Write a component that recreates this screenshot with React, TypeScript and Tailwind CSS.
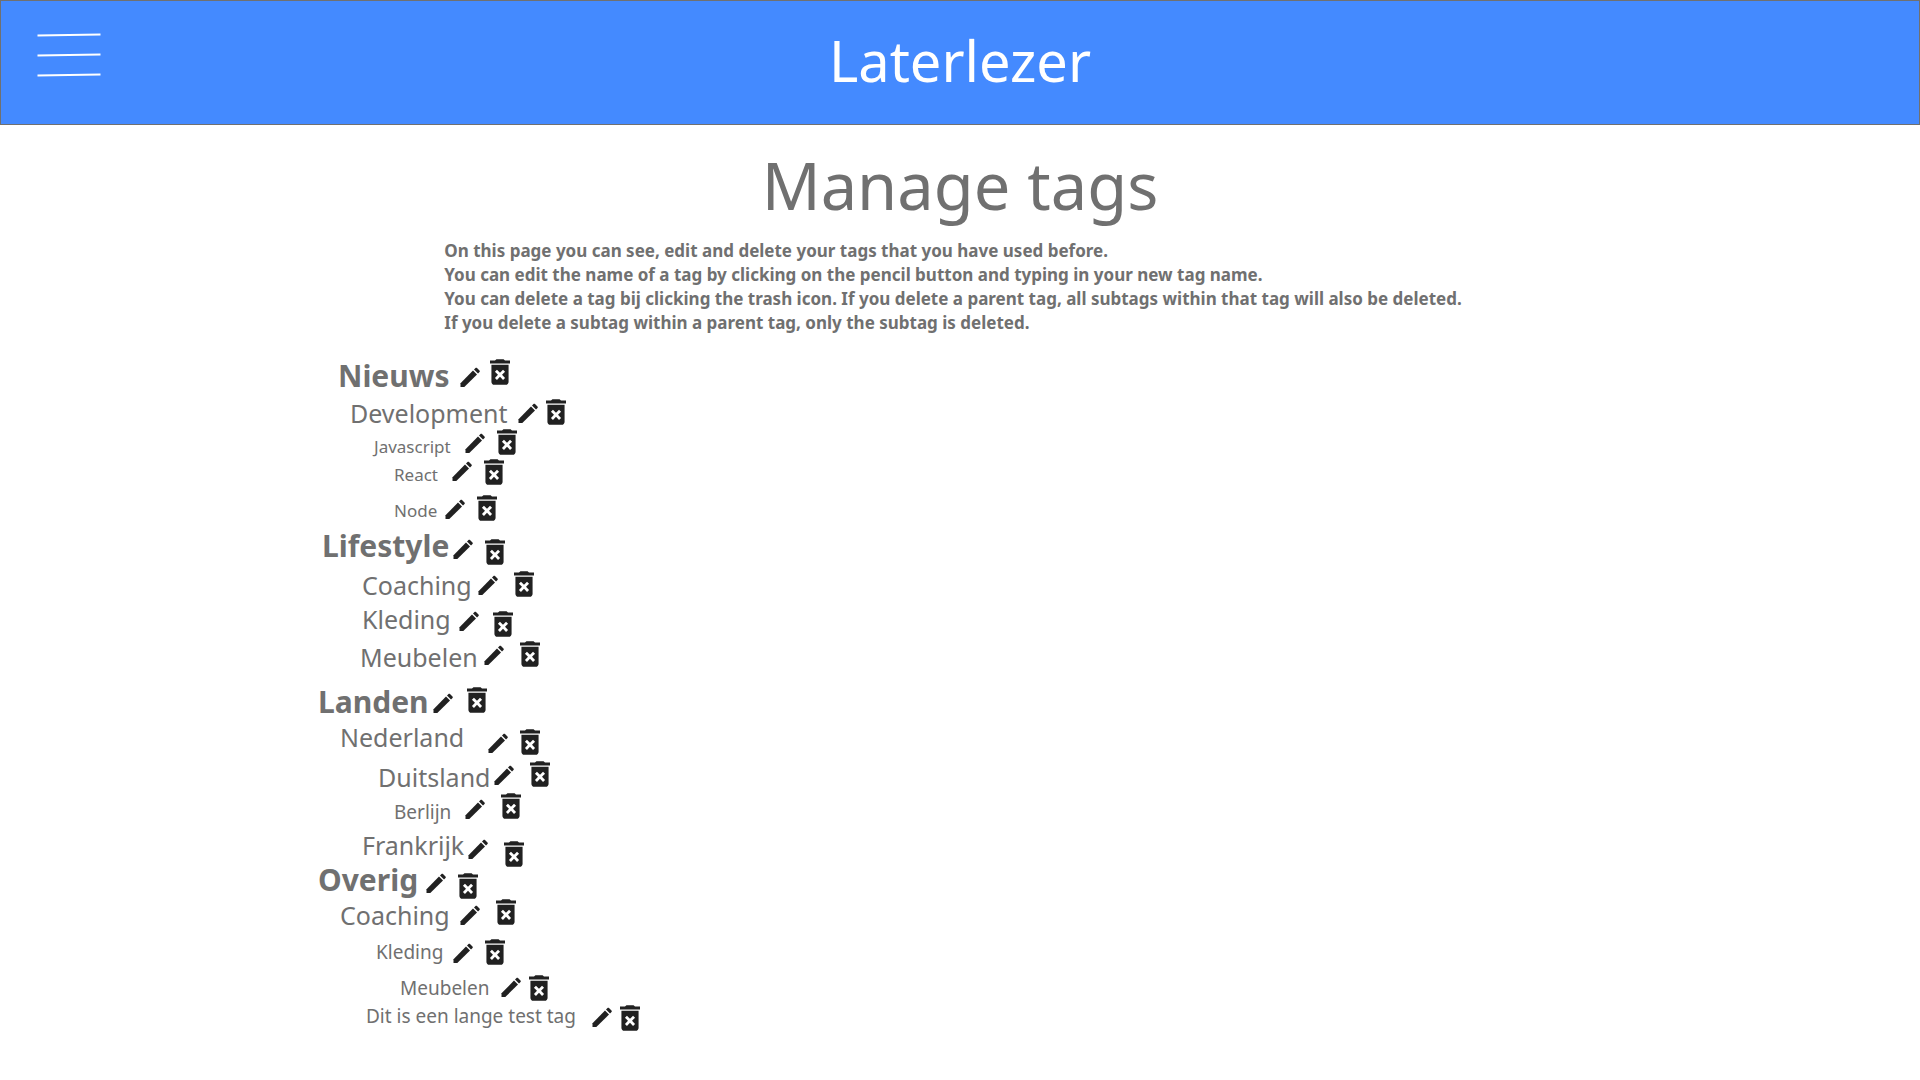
type Level = "parent" | "child" | "sub" | "leaf";

interface Tag {
  name: string;
  level: Level;
  row: string;
  pencil: string;
  trash: string;
}

const levelStyles: Record<Level, string> = {
  parent: "text-[30px] leading-[38px] font-bold",
  child: "text-[25px] leading-[36px]",
  sub: "text-[19px] leading-[30px]",
  leaf: "text-[17px] leading-[28px]",
};

const tags: Tag[] = [
  { name: "Nieuws", level: "parent", row: "h-10 pl-5", pencil: "ml-2.5 mb-2", trash: "ml-2.5 mb-2.5" },
  { name: "Development", level: "child", row: "h-9 pl-8", pencil: "ml-2.5 mb-2", trash: "ml-2 mb-1.5" },
  { name: "Javascript", level: "leaf", row: "h-7.5 pl-14", pencil: "ml-3.5 mb-2", trash: "ml-3 mb-1.5" },
  { name: "React", level: "leaf", row: "h-7 pl-19", pencil: "ml-3.5 mb-2", trash: "ml-3 mb-1" },
  { name: "Node", level: "leaf", row: "h-9 pl-19", pencil: "ml-2 mb-1.5", trash: "ml-3 mb-1" },
  { name: "Lifestyle", level: "parent", row: "h-10 pl-1", pencil: "ml-1 mb-1.5", trash: "ml-3 mb-0" },
  { name: "Coaching", level: "child", row: "h-9.5 pl-11", pencil: "ml-1.5 mb-2", trash: "ml-4 mb-1.5" },
  { name: "Kleding", level: "child", row: "h-8.5 pl-11", pencil: "ml-2 mb-1.5", trash: "ml-3.5 mb-0" },
  { name: "Meubelen", level: "child", row: "h-9.5 pl-10.5", pencil: "ml-1.5 mb-2.5", trash: "ml-4 mb-2" },
  { name: "Landen", level: "parent", row: "h-11.5 pl-0", pencil: "ml-1 mb-2", trash: "ml-3.5 mb-2" },
  { name: "Nederland", level: "child", row: "h-8.5 pl-5.5", pencil: "ml-6 mb-0.5", trash: "ml-3 mb-0" },
  { name: "Duitsland", level: "child", row: "h-10 pl-15", pencil: "ml-1 mb-2.5", trash: "ml-4 mb-2" },
  { name: "Berlijn", level: "sub", row: "h-8 pl-19", pencil: "ml-3.5 mb-2", trash: "ml-4 mb-2" },
  { name: "Frankrijk", level: "child", row: "h-9 pl-11", pencil: "ml-1 mb-1", trash: "ml-4 -mb-1" },
  { name: "Overig", level: "parent", row: "h-9 pl-0", pencil: "ml-2 mb-1.5", trash: "ml-3 mb-0" },
  { name: "Coaching", level: "child", row: "h-8.5 pl-5.5", pencil: "ml-2.5 mb-2", trash: "ml-4 mb-2" },
  { name: "Kleding", level: "sub", row: "h-8.5 pl-14.5", pencil: "ml-2.5 mb-1", trash: "ml-3 mb-0.5" },
  { name: "Meubelen", level: "sub", row: "h-9 pl-20.5", pencil: "ml-3 mb-1.5", trash: "ml-2 mb-0.5" },
  { name: "Dit is een lange test tag", level: "sub", row: "h-7 pl-12", pencil: "ml-4 mb-1", trash: "ml-2 mb-0" },
];

const intro = [
  "On this page you can see, edit and delete your tags that you have used before.",
  "You can edit the name of a tag by clicking on the pencil button and typing in your new tag name.",
  "You can delete a tag bij clicking the trash icon. If you delete a parent tag, all subtags within that tag will also be deleted.",
  "If you delete a subtag within a parent tag, only the subtag is deleted.",
];

function PencilIcon() {
  return (
    <svg viewBox="0 0 20 20" className="size-5 fill-[#212121]" aria-hidden="true">
      <path d="M.5 16.2v3.8h3.8L17 7.6l-4-4z" />
      <path d="M14 2.6l4 4 1.5-1.5c.5-.5.5-1 0-1.5L17 1c-.5-.5-1-.5-1.5 0z" />
    </svg>
  );
}

function TrashIcon() {
  return (
    <svg viewBox="5 3 14 18" className="h-6.5 w-5 fill-[#212121]" aria-hidden="true">
      <path d="M6 19c0 1.1.9 2 2 2h8c1.1 0 2-.9 2-2V7H6v12zm2.46-7.12 1.41-1.41L12 12.59l2.12-2.12 1.41 1.41L13.41 14l2.12 2.12-1.41 1.41L12 15.41l-2.12 2.12-1.41-1.41L10.59 14l-2.13-2.12zM15.5 4l-1-1h-5l-1 1H5v2h14V4z" />
    </svg>
  );
}

function TagRow({ tag }: { tag: Tag }) {
  return (
    <li className={`flex items-end ${tag.row}`}>
      <span className={`whitespace-nowrap ${levelStyles[tag.level]}`}>{tag.name}</span>
      <button type="button" aria-label={`Edit ${tag.name}`} className={`cursor-pointer ${tag.pencil}`}>
        <PencilIcon />
      </button>
      <button type="button" aria-label={`Delete ${tag.name}`} className={`cursor-pointer ${tag.trash}`}>
        <TrashIcon />
      </button>
    </li>
  );
}

export default function App() {
  return (
    <div className="min-h-screen bg-white font-['Noto_Sans','Open_Sans',sans-serif] text-[#707070]">
      <header className="grid h-[125px] grid-cols-[1fr_auto_1fr] items-center border border-[#707070] bg-[#448aff] pb-1.5">
        <button type="button" aria-label="Menu" className="mb-2.5 ml-9 w-fit cursor-pointer">
          <svg viewBox="0 0 64 44" className="h-11 w-16 fill-none stroke-white stroke-2" aria-hidden="true">
            <path d="M.5 2.5 63.5 1.5M.5 22.5 63.5 21.5M.5 42.5 63.5 41.5" />
          </svg>
        </button>
        <span className="text-[56px] leading-[72px] text-white">Laterlezer</span>
      </header>
      <main>
        <h1 className="mt-5 text-center text-[65px] leading-[80px]">Manage tags</h1>
        <div className="mt-3.5 flex justify-center pr-3.5">
          <p className="text-[17px] leading-6 font-bold">
            {intro.map((line) => (
              <span key={line} className="block">
                {line}
              </span>
            ))}
          </p>
        </div>
        <ul className="mt-5 ml-[318px]">
          {tags.map((tag, i) => (
            <TagRow key={i} tag={tag} />
          ))}
        </ul>
      </main>
    </div>
  );
}
